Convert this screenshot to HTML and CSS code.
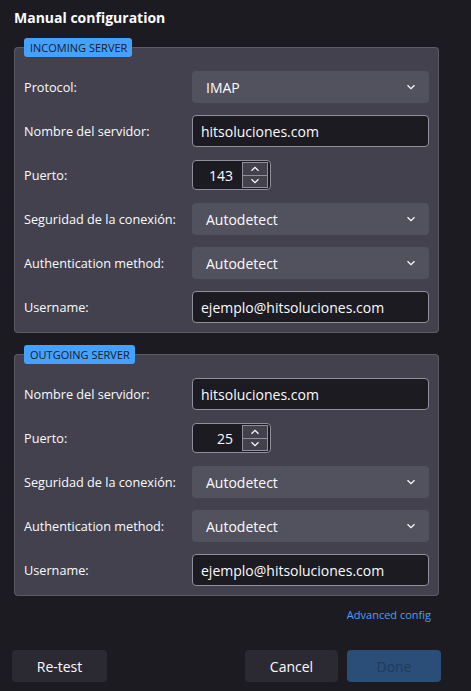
FILE: index.html
```html
<!DOCTYPE html>
<html>
<head>
<meta charset="utf-8">
<link rel="stylesheet" href="styles.css">
</head>
<body>
<div class="page">
  <h1 class="title">Manual configuration</h1>

  <fieldset class="group">
    <legend class="badge">INCOMING SERVER</legend>
    <div class="rows">
      <label class="lbl">Protocol:</label>
      <div class="select"><span>IMAP</span><svg class="chev" width="10" height="6" viewBox="0 0 10 6"><path d="M1.5 1.2 L5 4.6 L8.5 1.2" fill="none" stroke="#fbfbfe" stroke-width="1.3"/></svg></div>

      <label class="lbl">Nombre del servidor:</label>
      <div class="input">hitsoluciones.com</div>

      <label class="lbl">Puerto:</label>
      <div class="spin"><span class="num">143</span><span class="btns"><span class="b"><svg width="10" height="6" viewBox="0 0 10 6"><path d="M1.5 4.8 L5 1.4 L8.5 4.8" fill="none" stroke="#fbfbfe" stroke-width="1.3"/></svg></span><span class="b"><svg width="10" height="6" viewBox="0 0 10 6"><path d="M1.5 1.2 L5 4.6 L8.5 1.2" fill="none" stroke="#fbfbfe" stroke-width="1.3"/></svg></span></span></div>

      <label class="lbl">Seguridad de la conexión:</label>
      <div class="select"><span>Autodetect</span><svg class="chev" width="10" height="6" viewBox="0 0 10 6"><path d="M1.5 1.2 L5 4.6 L8.5 1.2" fill="none" stroke="#fbfbfe" stroke-width="1.3"/></svg></div>

      <label class="lbl">Authentication method:</label>
      <div class="select"><span>Autodetect</span><svg class="chev" width="10" height="6" viewBox="0 0 10 6"><path d="M1.5 1.2 L5 4.6 L8.5 1.2" fill="none" stroke="#fbfbfe" stroke-width="1.3"/></svg></div>

      <label class="lbl">Username:</label>
      <div class="input">ejemplo@hitsoluciones.com</div>
    </div>
  </fieldset>

  <fieldset class="group second">
    <legend class="badge">OUTGOING SERVER</legend>
    <div class="rows">
      <label class="lbl">Nombre del servidor:</label>
      <div class="input">hitsoluciones.com</div>

      <label class="lbl">Puerto:</label>
      <div class="spin"><span class="num">25</span><span class="btns"><span class="b"><svg width="10" height="6" viewBox="0 0 10 6"><path d="M1.5 4.8 L5 1.4 L8.5 4.8" fill="none" stroke="#fbfbfe" stroke-width="1.3"/></svg></span><span class="b"><svg width="10" height="6" viewBox="0 0 10 6"><path d="M1.5 1.2 L5 4.6 L8.5 1.2" fill="none" stroke="#fbfbfe" stroke-width="1.3"/></svg></span></span></div>

      <label class="lbl">Seguridad de la conexión:</label>
      <div class="select"><span>Autodetect</span><svg class="chev" width="10" height="6" viewBox="0 0 10 6"><path d="M1.5 1.2 L5 4.6 L8.5 1.2" fill="none" stroke="#fbfbfe" stroke-width="1.3"/></svg></div>

      <label class="lbl">Authentication method:</label>
      <div class="select"><span>Autodetect</span><svg class="chev" width="10" height="6" viewBox="0 0 10 6"><path d="M1.5 1.2 L5 4.6 L8.5 1.2" fill="none" stroke="#fbfbfe" stroke-width="1.3"/></svg></div>

      <label class="lbl">Username:</label>
      <div class="input">ejemplo@hitsoluciones.com</div>
    </div>
  </fieldset>

  <div class="adv"><a class="link">Advanced config</a></div>

  <div class="actions">
    <button class="btn retest">Re-test</button>
    <div class="right">
      <button class="btn cancel">Cancel</button>
      <button class="btn done">Done</button>
    </div>
  </div>
</div>
</body>
</html>
```

FILE: styles.css
```css
html, body {
  margin: 0;
  padding: 0;
  background: #1c1b22;
  color: #fbfbfe;
  font-family: "Open Sans", "Noto Sans", sans-serif;
}

.page {
  width: 471px;
  height: 691px;
  box-sizing: border-box;
  padding: 0 32px 0 14px;
}

.title {
  margin: 0;
  padding-top: 8px;
  height: 22px;
  font-size: 14px;
  font-weight: 700;
  line-height: 20px;
  color: #fbfbfe;
}

.group {
  margin: 8px 0 0 0;
  padding: 14px 9px 9px 9px;
  border: 1px solid #5b5b66;
  border-radius: 4px;
  background: #42414d;
  min-width: 0;
}

.group.second {
  margin-top: 12px;
}

.badge {
  padding: 0 5px 0 6px;
  height: 19px;
  box-sizing: border-box;
  line-height: 19px;
  font-size: 11px;
  background: #45a1ff;
  color: #1c1b22;
  border-radius: 3px;
}

.rows {
  display: grid;
  grid-template-columns: 168px 237px;
  grid-auto-rows: 32px;
  row-gap: 12px;
  align-items: center;
}

.lbl {
  font-size: 12.7px;
  color: #fbfbfe;
}

.select {
  height: 32px;
  box-sizing: border-box;
  background: #52525e;
  border-radius: 4px;
  display: flex;
  align-items: center;
  justify-content: space-between;
  padding: 0 13px 0 14px;
  font-size: 14px;
}

.input {
  height: 32px;
  box-sizing: border-box;
  background: #1c1b22;
  border: 1px solid #8f8f9d;
  border-radius: 4px;
  display: flex;
  align-items: center;
  padding: 0 8px;
  font-size: 14px;
}

.spin {
  width: 79px;
  height: 30px;
  box-sizing: border-box;
  background: #1c1b22;
  border: 1px solid #8f8f9d;
  border-radius: 4px;
  display: flex;
  align-items: center;
  font-size: 14px;
}

.num {
  flex: 1;
  text-align: right;
  padding-right: 9px;
}

.btns {
  display: flex;
  flex-direction: column;
  width: 26px;
  height: 26px;
  margin-right: 2px;
  background: #42414d;
}

.b {
  flex: 1;
  border: 1px solid #8f8f9d;
  display: flex;
  align-items: center;
  justify-content: center;
}

.b + .b {
  border-top: none;
}

.adv {
  display: flex;
  justify-content: flex-end;
  padding: 11px 8px 0 0;
  height: 22px;
}

.link {
  font-size: 11px;
  color: #45a1ff;
}

.actions {
  margin-top: 21px;
  margin-left: -2px;
  margin-right: -2px;
  display: flex;
  justify-content: space-between;
}

.right {
  display: flex;
  gap: 9px;
}

.btn {
  height: 32px;
  border: none;
  border-radius: 4px;
  font-family: "Open Sans", "Noto Sans", sans-serif;
  font-size: 14px;
  padding: 0;
}

.retest, .cancel {
  background: #2b2a33;
  color: #fbfbfe;
}

.retest { width: 95px; }
.cancel { width: 93px; }

.done {
  width: 94px;
  background: #2a4e78;
  color: #1e3b5c;
}
```
